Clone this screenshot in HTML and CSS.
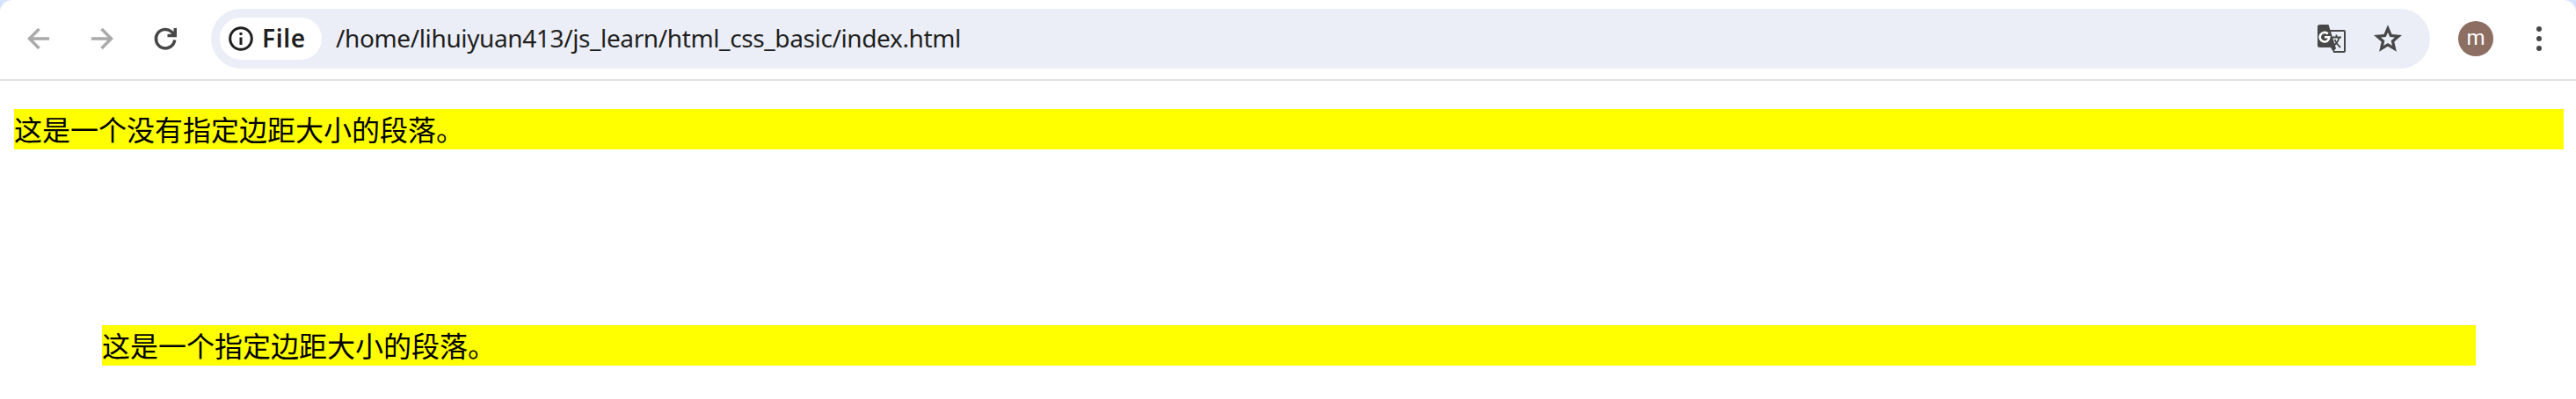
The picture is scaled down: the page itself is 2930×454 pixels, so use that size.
FILE: index.html
```html
<!DOCTYPE html>
<html lang="zh-CN">
<head>
<meta charset="utf-8">
<title>index.html</title>
<link rel="stylesheet" href="styles.css">
</head>
<body>
<header class="frame">
  <div class="toolbar">
    <nav class="nav">
      <svg class="icon muted" viewBox="0 0 24 24"><path d="M24 12H1.5M12.500 1L1.500 12L12.500 23"/></svg>
      <svg class="icon muted" viewBox="0 0 24 24"><path d="M0 12H22.500M11.500 1L22.500 12L11.500 23"/></svg>
      <svg class="icon dark" viewBox="0 0 24 24"><path d="M22.700 13.500A10.700 10.700 0 1 1 19 4L22 7M25 8.500H14.500M23.300 0V9"/></svg>
    </nav>
    <div class="omnibox">
      <div class="chip">
        <svg class="info" viewBox="0 0 28 28"><circle cx="14" cy="14" r="12.300"/><path d="M14 12.500V21M14 7V10"/></svg>
        <span class="scheme">File</span>
      </div>
      <span class="url">/home/lihuiyuan413/js_learn/html_css_basic/index.html</span>
      <svg class="translate" viewBox="0 0 32 32"><path class="sheet" d="M14 7H30Q31 7 31 8V30Q31 31 30 31H18"/><path class="solid" d="M2.500 0H12.500L21 27L18 31L15 26H2.500Q0 26 0 23.500V2.500Q0 0 2.500 0Z"/><path class="g" d="M11.800 10.500A5.300 5.300 0 1 0 13.300 14.200H8"/><path class="han" d="M17 14.500H27M21.500 11.500V14.500M24.500 15Q23 21 18 24M19.500 17Q21 21 26 26"/></svg>
      <svg class="star" viewBox="2 2 20 19"><path fill-rule="evenodd" d="M22 9.240L14.810 8.620L12 2L9.190 8.630L2 9.240L7.460 13.970L5.820 21L12 17.270L18.180 21L16.550 13.970ZM12 14.900L8.900 16.750L9.720 13.230L7 10.870L10.600 10.570L12 7.250L13.400 10.570L17 10.870L14.280 13.240L15.100 16.750Z"/></svg>
    </div>
    <div class="avatar">m</div>
    <svg class="menu" viewBox="0 0 6 28"><circle cx="3" cy="3" r="3"/><circle cx="3" cy="14" r="3"/><circle cx="3" cy="25" r="3"/></svg>
  </div>
</header>
<main class="page">
  <p class="para">这是一个没有指定边距大小的段落。</p>
  <p class="para margin">这是一个指定边距大小的段落。</p>
</main>
</body>
</html>
```
FILE: styles.css
```css
* { box-sizing: border-box; }
body { margin: 0; background: #fff; }
.frame { background: #d3e3fd; }
.toolbar {
  display: flex;
  align-items: center;
  height: 92px;
  padding: 10px 39px 12px 32px;
  background: #fff;
  border-bottom: 2px solid #e1e1e1;
  border-radius: 14px 14px 0 0;
}
.nav { display: flex; gap: 48px; margin-right: 40px; }
.icon { width: 24px; height: 24px; overflow: visible; fill: none; stroke-width: 3.5; }
.muted { stroke: #aaa; }
.dark { stroke: #474747; }
.omnibox {
  display: flex;
  align-items: center;
  flex: 1;
  height: 68px;
  padding: 0 32px 0 10px;
  border-radius: 34px;
  background: #ebeef7;
  font: 28px "Noto Sans", sans-serif;
  color: #1f1f1f;
}
.chip {
  display: flex;
  align-items: center;
  width: 116px;
  height: 48px;
  padding-left: 10px;
  border-radius: 24px;
  background: #fff;
}
.info { width: 28px; height: 28px; margin-right: 10px; fill: none; stroke: #1f1f1f; stroke-width: 3; }
.scheme { padding-bottom: 2px; font-weight: 600; letter-spacing: 0.6px; white-space: nowrap; }
.url { flex: 1; margin-left: 16px; padding-bottom: 2px; white-space: nowrap; letter-spacing: -0.38px; }
.translate { width: 32px; height: 32px; margin-right: 32px; fill: none; }
.translate .solid { fill: #474747; }
.sheet { stroke: #474747; stroke-width: 2; }
.g { stroke: #fff; stroke-width: 2.6; }
.han { stroke: #474747; stroke-width: 1.8; }
.star { width: 32px; height: 31px; margin-bottom: 2px; fill: #474747; }
.avatar {
  width: 40px;
  height: 40px;
  margin: 0 49px 0 32px;
  border-radius: 50%;
  background: #8d6e63;
  color: #fff;
  font: 24px/38px Roboto, sans-serif;
  text-align: center;
}
.menu { width: 6px; height: 28px; fill: #474747; }
.page { padding: 32px 14px 0 16px; font: 32px "Noto Sans CJK SC", sans-serif; color: #000; }
.para { height: 46px; margin: 0; line-height: 44px; background: #ff0; }
.margin { margin: 200px 100px 0; }
```
